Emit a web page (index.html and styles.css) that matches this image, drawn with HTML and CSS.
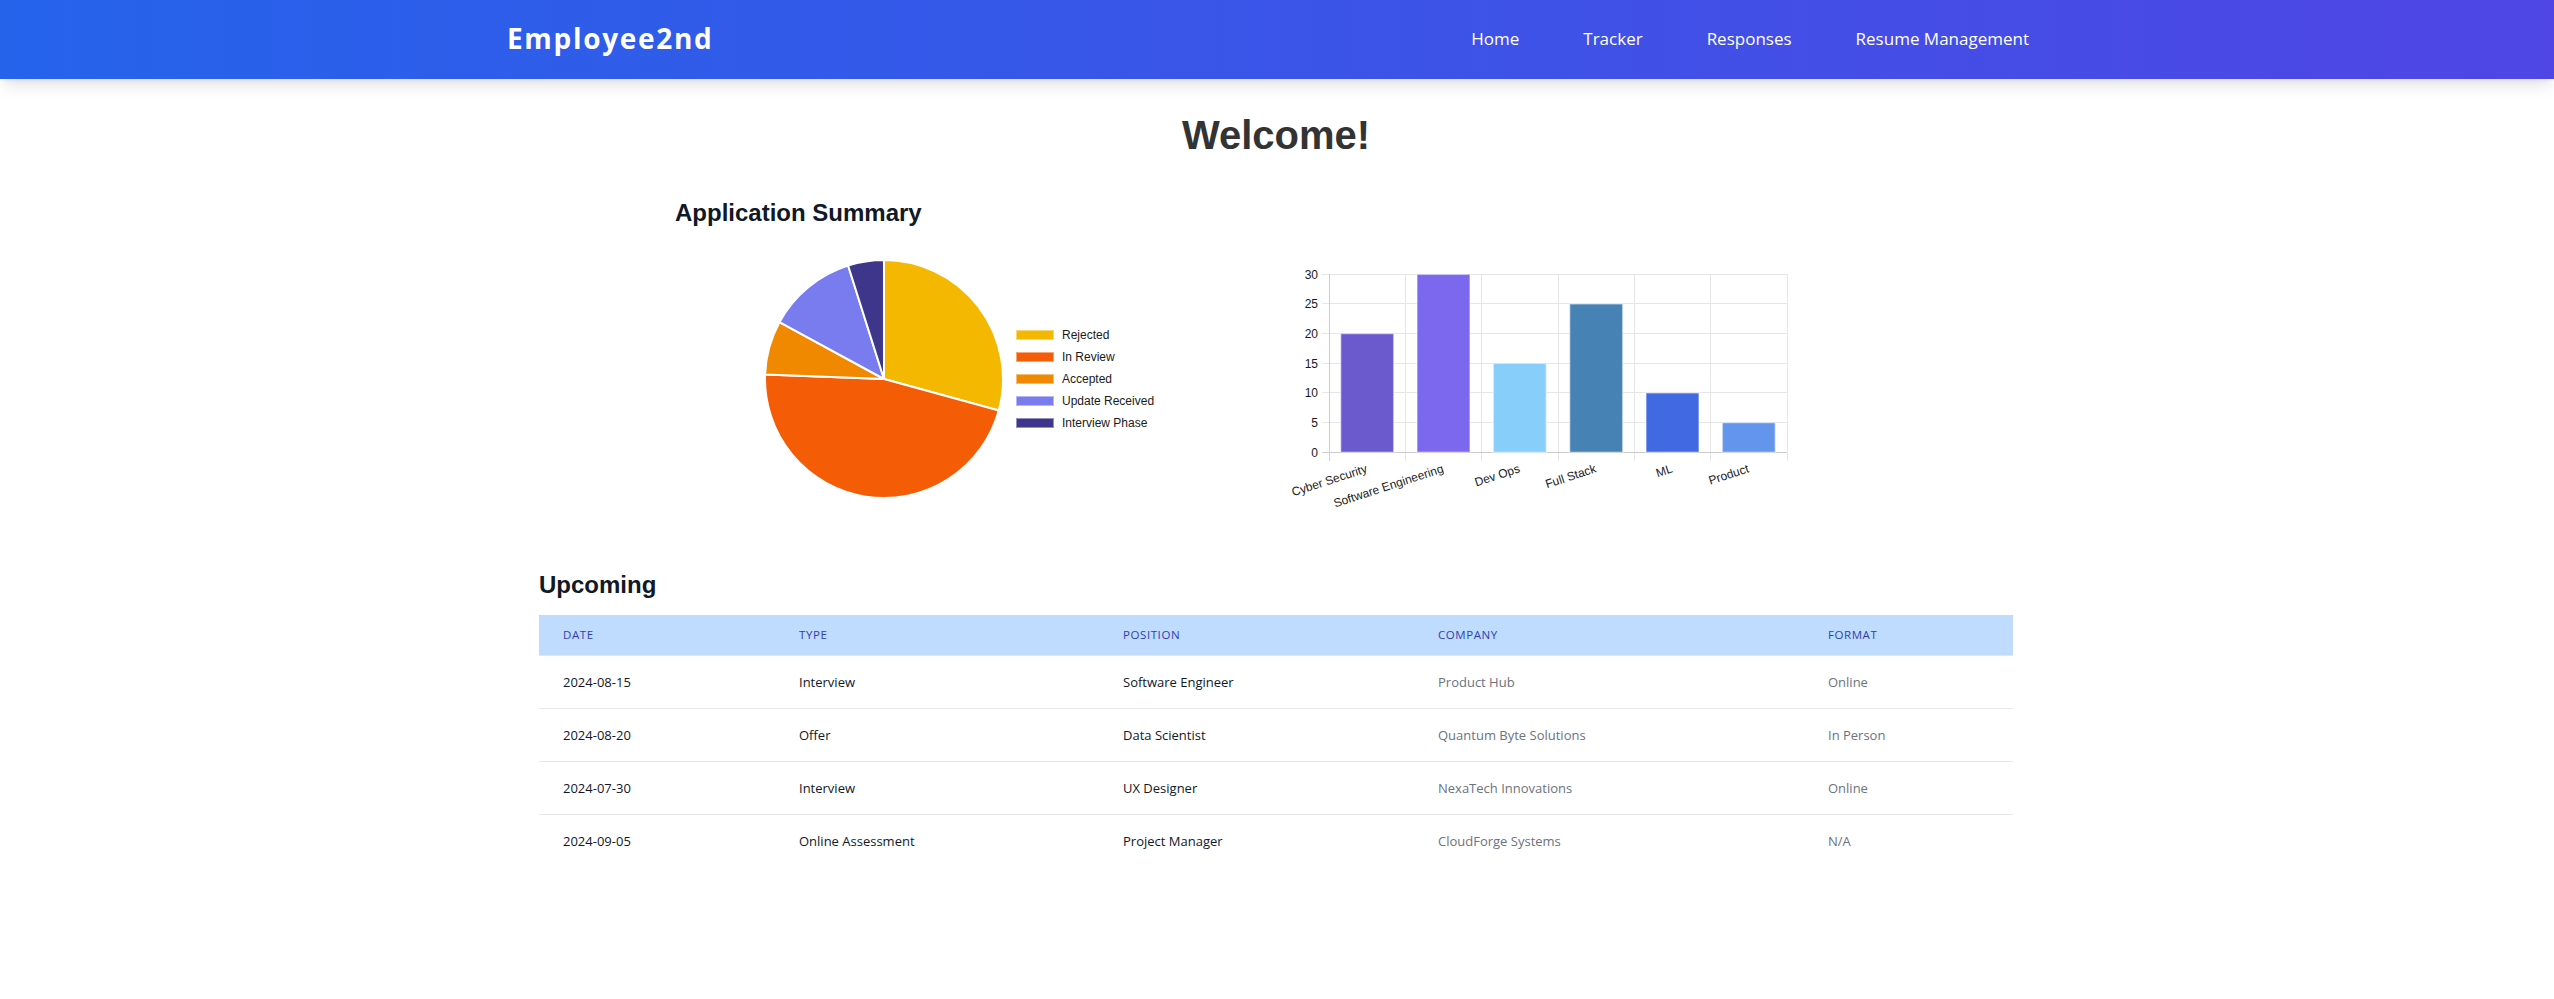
FILE: index.html
```html
<!DOCTYPE html>
<html lang="en">
<head>
<meta charset="utf-8">
<title>Employee2nd</title>
<link rel="stylesheet" href="styles.css">
</head>
<body>
<header class="topbar">
  <div class="topbar-inner">
    <a class="brand" href="#">Employee2nd</a>
    <nav class="nav">
      <a class="nav-link" href="#">Home</a>
      <a class="nav-link" href="#">Tracker</a>
      <a class="nav-link" href="#">Responses</a>
      <a class="nav-link" href="#">Resume Management</a>
    </nav>
  </div>
</header>

<main class="page">
  <h1 class="welcome">Welcome!</h1>

  <section class="charts">
    <div class="pie-col">
      <h2 class="section-title">Application Summary</h2>
      <div class="pie-wrap">
        <svg class="pie" viewBox="0 0 240 240" xmlns="http://www.w3.org/2000/svg">
          <g stroke="#ffffff" stroke-width="2" stroke-linejoin="round">
            <path fill="#f5b800" d="M120,120 L120,1 A119,119 0 0 1 234.75,151.54 Z"/>
            <path fill="#f45d06" d="M120,120 L234.75,151.54 A119,119 0 0 1 1.09,115.44 Z"/>
            <path fill="#f08900" d="M120,120 L1.09,115.44 A119,119 0 0 1 15.46,63.15 Z"/>
            <path fill="#797cee" d="M120,120 L15.46,63.15 A119,119 0 0 1 84.10,6.55 Z"/>
            <path fill="#3d368a" d="M120,120 L84.10,6.55 A119,119 0 0 1 120,1 Z"/>
          </g>
        </svg>
        <ul class="legend">
          <li class="legend-item"><span class="swatch sw-rejected"></span>Rejected</li>
          <li class="legend-item"><span class="swatch sw-review"></span>In Review</li>
          <li class="legend-item"><span class="swatch sw-accepted"></span>Accepted</li>
          <li class="legend-item"><span class="swatch sw-update"></span>Update Received</li>
          <li class="legend-item"><span class="swatch sw-interview"></span>Interview Phase</li>
        </ul>
      </div>
    </div>

    <div class="bar-col">
      <svg class="bar-chart" viewBox="0 0 540 270" xmlns="http://www.w3.org/2000/svg">
        <g stroke="#e6e6e6" stroke-width="1" shape-rendering="crispEdges">
          <line x1="62" y1="14.3" x2="527" y2="14.3"/>
          <line x1="62" y1="43.9" x2="527" y2="43.9"/>
          <line x1="62" y1="73.6" x2="527" y2="73.6"/>
          <line x1="62" y1="103.3" x2="527" y2="103.3"/>
          <line x1="62" y1="132.9" x2="527" y2="132.9"/>
          <line x1="62" y1="162.6" x2="527" y2="162.6"/>
          <line x1="145.3" y1="14.3" x2="145.3" y2="200.7"/>
          <line x1="221.7" y1="14.3" x2="221.7" y2="200.7"/>
          <line x1="298" y1="14.3" x2="298" y2="200.7"/>
          <line x1="374.3" y1="14.3" x2="374.3" y2="200.7"/>
          <line x1="450.7" y1="14.3" x2="450.7" y2="200.7"/>
          <line x1="527" y1="14.3" x2="527" y2="200.7"/>
        </g>
        <g stroke="#cccccc" stroke-width="1" shape-rendering="crispEdges">
          <line x1="69" y1="14.3" x2="69" y2="200.7"/>
          <line x1="62" y1="192.3" x2="527" y2="192.3"/>
        </g>
        <g stroke="rgba(255,255,255,0.45)" stroke-width="1.5">
          <rect x="80.7" y="73.6" width="53" height="118.7" fill="#6a5acd"/>
          <rect x="157" y="14.3" width="53" height="178" fill="#7b68ee"/>
          <rect x="233.3" y="103.3" width="53" height="89" fill="#87cefa"/>
          <rect x="309.7" y="43.9" width="53" height="148.4" fill="#4682b4"/>
          <rect x="386" y="132.9" width="53" height="59.4" fill="#4169e1"/>
          <rect x="462.3" y="162.6" width="53" height="29.7" fill="#6495ed"/>
        </g>
        <g class="tick-text" text-anchor="end">
          <text x="58" y="196.6">0</text>
          <text x="58" y="166.9">5</text>
          <text x="58" y="137.2">10</text>
          <text x="58" y="107.6">15</text>
          <text x="58" y="77.9">20</text>
          <text x="58" y="48.2">25</text>
          <text x="58" y="18.6">30</text>
        </g>
        <g class="tick-text" text-anchor="end">
          <text x="108" y="212" transform="rotate(-18 108 212)">Cyber Security</text>
          <text x="184.3" y="212" transform="rotate(-18 184.3 212)">Software Engineering</text>
          <text x="260.6" y="212" transform="rotate(-18 260.6 212)">Dev Ops</text>
          <text x="337" y="212" transform="rotate(-18 337 212)">Full Stack</text>
          <text x="413.3" y="212" transform="rotate(-18 413.3 212)">ML</text>
          <text x="489.6" y="212" transform="rotate(-18 489.6 212)">Product</text>
        </g>
      </svg>
    </div>
  </section>

  <section class="upcoming">
    <h2 class="section-title">Upcoming</h2>
    <table class="events">
      <colgroup>
        <col class="col-date">
        <col class="col-type">
        <col class="col-position">
        <col class="col-company">
        <col class="col-format">
      </colgroup>
      <thead>
        <tr>
          <th>Date</th>
          <th>Type</th>
          <th>Position</th>
          <th>Company</th>
          <th>Format</th>
        </tr>
      </thead>
      <tbody>
        <tr>
          <td>2024-08-15</td>
          <td>Interview</td>
          <td>Software Engineer</td>
          <td class="muted">Product Hub</td>
          <td class="muted">Online</td>
        </tr>
        <tr>
          <td>2024-08-20</td>
          <td>Offer</td>
          <td>Data Scientist</td>
          <td class="muted">Quantum Byte Solutions</td>
          <td class="muted">In Person</td>
        </tr>
        <tr>
          <td>2024-07-30</td>
          <td>Interview</td>
          <td>UX Designer</td>
          <td class="muted">NexaTech Innovations</td>
          <td class="muted">Online</td>
        </tr>
        <tr>
          <td>2024-09-05</td>
          <td>Online Assessment</td>
          <td>Project Manager</td>
          <td class="muted">CloudForge Systems</td>
          <td class="muted">N/A</td>
        </tr>
      </tbody>
    </table>
  </section>
</main>
</body>
</html>
```
FILE: styles.css
```css
* { box-sizing: border-box; }

body {
  margin: 0;
  background: #ffffff;
  font-family: "Open Sans", "Noto Sans", sans-serif;
}

/* ---------- top bar ---------- */
.topbar {
  position: relative;
  z-index: 1;
  height: 79px;
  background: linear-gradient(to right, #2563eb, #4f46e5);
  box-shadow: 0 10px 15px -3px rgba(0, 0, 0, 0.1), 0 4px 6px -4px rgba(0, 0, 0, 0.1);
}

.topbar-inner {
  max-width: 1536px;
  height: 100%;
  margin: 0 auto;
  padding-bottom: 3px;
  display: flex;
  align-items: center;
  justify-content: space-between;
}

.brand {
  color: #ffffff;
  font-size: 28px;
  font-weight: 700;
  letter-spacing: 0.06em;
  text-decoration: none;
  margin-left: -2px;
}

.nav {
  display: flex;
  gap: 32px;
}

.nav-link {
  color: #ffffff;
  font-size: 17px;
  padding: 0 16px;
  text-decoration: none;
}

/* ---------- page ---------- */
.page {
  max-width: 1476px;
  margin: 0 auto;
  padding: 33px 2px 0 0;
}

.welcome {
  margin: 0;
  text-align: center;
  font: 700 40px/46px "Liberation Sans", Arial, sans-serif;
  color: #333333;
}

.section-title {
  margin: 0;
  font: 700 24px/28px "Liberation Sans", Arial, sans-serif;
  color: #111827;
}

/* ---------- charts ---------- */
.charts {
  display: flex;
  margin-top: 41px;
  padding-left: 136px;
}

.pie-col {
  width: 585px;
}

.pie-wrap {
  display: flex;
  align-items: center;
  gap: 12px;
  margin-top: 32px;
  padding-left: 89px;
}

.pie {
  display: block;
  width: 240px;
  height: 240px;
}

.legend {
  list-style: none;
  margin: 0;
  padding: 0;
  display: flex;
  flex-direction: column;
  gap: 8px;
  font: 12px/14px "Liberation Sans", Arial, sans-serif;
  color: #1a1a1a;
}

.legend-item {
  display: flex;
  align-items: center;
  gap: 8px;
}

.swatch {
  width: 38px;
  height: 10px;
  border: 1px solid rgba(255, 255, 255, 0.45);
}

.sw-rejected { background: #f5b800; }
.sw-review { background: #f45d06; }
.sw-accepted { background: #f08900; }
.sw-update { background: #797cee; }
.sw-interview { background: #3d368a; }

.bar-col {
  padding-top: 61px;
}

.bar-chart {
  display: block;
  width: 540px;
  height: 270px;
}

.tick-text {
  font: 12px "Liberation Sans", Arial, sans-serif;
  fill: #1a1a1a;
}

/* ---------- upcoming table ---------- */
.upcoming {
  margin-top: 41px;
}

.events {
  width: 100%;
  margin-top: 16px;
  border-collapse: collapse;
  table-layout: fixed;
}

.col-date { width: 236px; }
.col-type { width: 324px; }
.col-position { width: 315px; }
.col-company { width: 390px; }

.events th {
  padding: 12px 24px;
  background: #bfdbfe;
  color: #2f3fb0;
  font-size: 11.5px;
  line-height: 16px;
  font-weight: 400;
  letter-spacing: 0.05em;
  text-transform: uppercase;
  text-align: left;
}

.events td {
  padding: 16px 24px;
  border-top: 1px solid #e5e7eb;
  color: #111827;
  font-size: 13px;
  line-height: 20px;
}

.events td.muted {
  color: #6b7280;
}
```
